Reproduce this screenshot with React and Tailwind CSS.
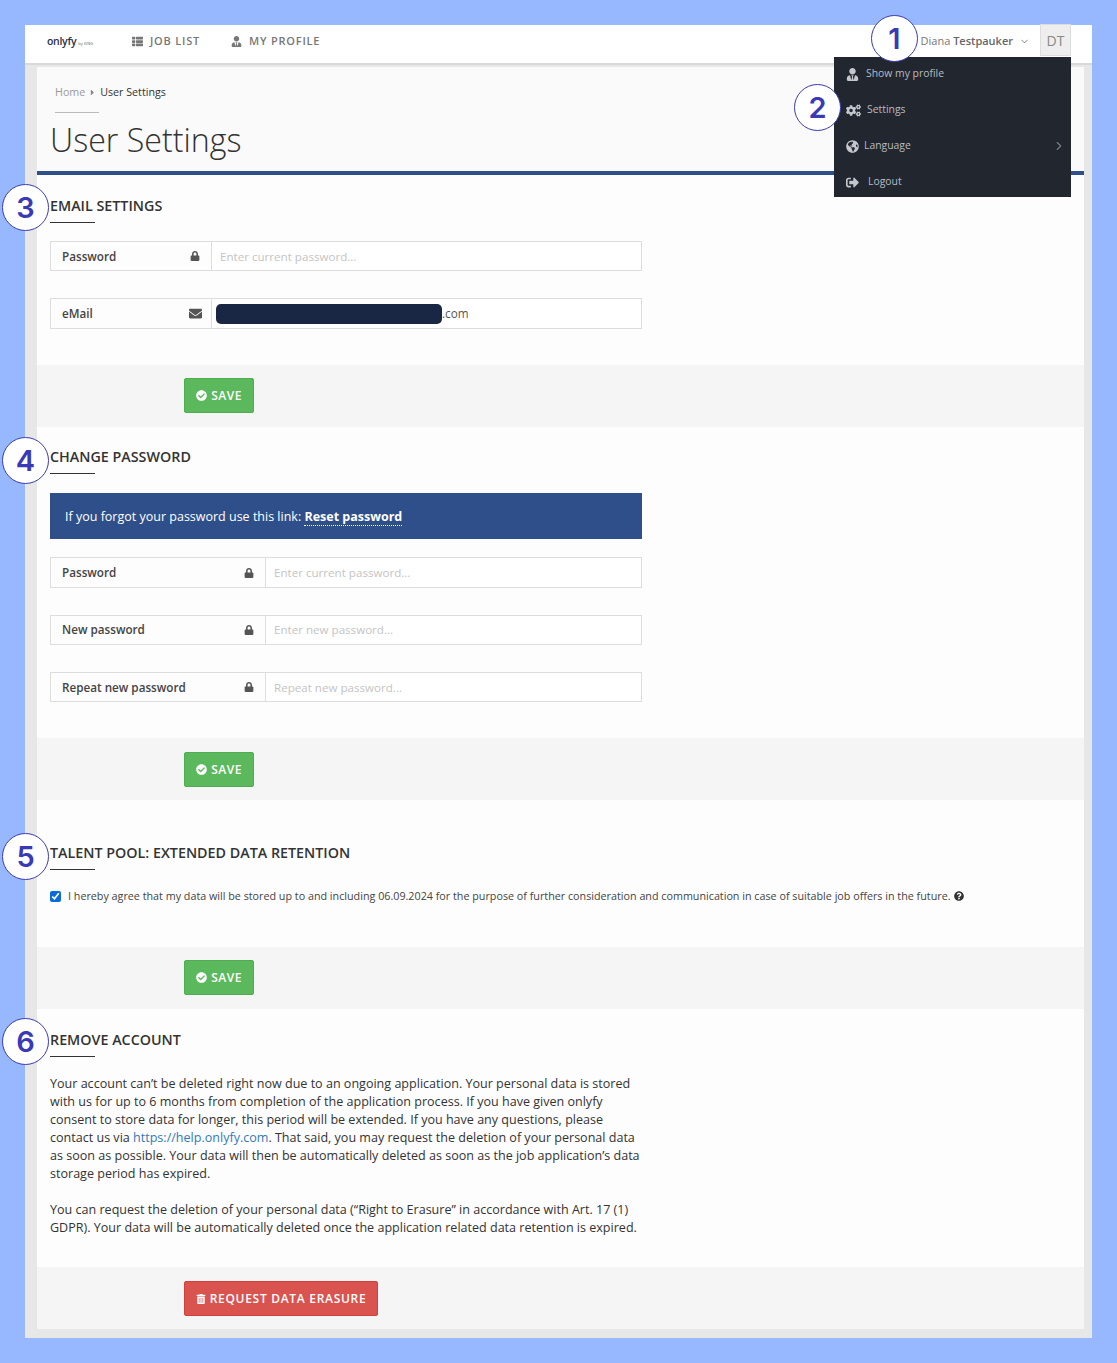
import { FaThList, FaUserTie, FaCogs, FaGlobeAmericas, FaSignOutAlt, FaLock, FaEnvelope, FaCheckCircle, FaQuestionCircle, FaTrashAlt, FaCaretRight } from "react-icons/fa";
import { LuChevronDown, LuChevronRight } from "react-icons/lu";

function Marker({ n, className }) {
  return (
    <div className={`absolute w-[47px] h-[47px] rounded-full border-[1.5px] border-[#3a3ab4] bg-white flex items-center justify-center text-[#3a3ab4] text-[29px] font-semibold font-['Inter',sans-serif] ${className}`}>
      {n}
    </div>
  );
}

function SectionTitle({ children }) {
  return (
    <div>
      <h2 className="text-[14.3px] leading-[20px] font-semibold text-[#333]">{children}</h2>
      <div className="w-[45px] h-px bg-[#333] mt-[6px]"></div>
    </div>
  );
}

function Field({ label, icon, placeholder, labelWidth, value, h = "h-[30px]", textNudge = "" }) {
  return (
    <div className={`flex w-[592px] border border-[#ddd] bg-white ${h}`}>
      <div className={`flex items-center justify-between pl-[11px] pr-[11px] border-r border-[#ddd] bg-[#fdfdfd] text-[#444] text-[11.7px] font-semibold shrink-0 ${labelWidth}`}>
        <span className={textNudge}>{label}</span>
        <span className="text-[#555] text-[10px]">{icon}</span>
      </div>
      {value ? (
        <div className="flex items-center pl-[4px] text-[#555] text-[11.7px]">
          <div className="w-[226px] h-[20px] rounded-[5px] bg-[#1a2744]"></div>
          <span>.com</span>
        </div>
      ) : (
        <div className={`flex items-center pl-[8px] text-[11.6px] text-[#c4c4c4] font-normal ${textNudge}`}>{placeholder}</div>
      )}
    </div>
  );
}

function FooterStrip({ children, className }) {
  return <div className={`bg-[#f5f5f5] h-[62px] pl-[147px] ${className}`}>{children}</div>;
}

function SaveButton() {
  return (
    <button className="flex items-center gap-[4px] h-[35px] w-[70px] justify-center rounded-[2px] border border-[#4cae4c] bg-[#5cb85c] text-white text-[12px] font-semibold tracking-[0.5px]">
      <FaCheckCircle className="text-[11px]" />
      SAVE
    </button>
  );
}

function MenuItem({ icon, label, gap, right }) {
  return (
    <div className="flex items-center h-[36px] pl-[12px] pr-[5px] text-[10.4px] text-[#b8bcc2]">
      <span className="text-[13px] text-[#c4c7cb]">{icon}</span>
      <span className={gap}>{label}</span>
      {right && <LuChevronRight className="ml-auto text-[14px] text-[#777c84]" />}
    </div>
  );
}

export default function App() {
  return (
    <div className="relative min-h-[1363px] bg-[#97b8ff] pt-[25px] px-[25px] pb-[25px] font-['Open_Sans',sans-serif]">
      <div className="bg-[#e7e7e7]">
        <header className="flex items-center h-[40px] bg-white border-b-2 border-[#d8d8d8] pl-[22px]">
          <div className="w-[85px] flex items-baseline text-[#2a3242] -mt-[4px]">
            <span className="text-[10.5px] font-semibold tracking-[-0.3px]">onlyfy</span>
            <span className="text-[4px] ml-[2px] text-[#666]">by XING</span>
          </div>
          <nav className="flex items-center text-[11px] font-semibold tracking-[0.8px] text-[#777] -mt-[6px]">
            <span className="flex items-center gap-[7px] w-[99px]"><FaThList className="text-[11px]" />JOB LIST</span>
            <span className="flex items-center gap-[7px]"><FaUserTie className="text-[11px]" />MY PROFILE</span>
          </nav>
          <div className="ml-auto mr-[21px] flex items-start h-[38px] -mt-[2px] text-[11px] text-[#777]">
            <span className="mt-[9px]">Diana <b className="font-semibold text-[#666]">Testpauker</b></span>
            <LuChevronDown className="ml-[6px] mt-[12px] text-[11px]" />
            <div className="ml-[10px] w-[31px] h-[32px] flex items-center justify-center bg-[#eee] border border-[#ddd] text-[14px] text-[#888]">DT</div>
          </div>
        </header>

        <main className="ml-[12px] mr-[8px] mt-[2px] pb-[9px]">
          <div className="bg-[#fafafa] h-[108px] border-b-4 border-[#2f4f8b] pl-[18px] pt-[17px]">
            <div className="flex items-center text-[10.7px] leading-[16px]">
              <span className="text-[#999]">Home</span>
              <FaCaretRight className="mx-[3px] text-[9px] text-[#888]" />
              <span className="text-[#333]">User Settings</span>
            </div>
            <div className="w-[44px] h-px bg-[#bbb] mt-[12px]"></div>
            <h1 className="-ml-[5px] mt-[8px] text-[32.2px] leading-[38px] font-light text-[#333]">User Settings</h1>
          </div>

          <section className="bg-[#fdfdfd] h-[190px] px-[13px] pt-[21px]">
            <SectionTitle>EMAIL SETTINGS</SectionTitle>
            <div className="mt-[18px] flex flex-col gap-[27px]">
              <Field label="Password" icon={<FaLock />} placeholder="Enter current password..." labelWidth="w-[161px]" textNudge="pt-[1px]" />
              <Field label="eMail" icon={<FaEnvelope className="text-[13px] -mr-[2px]" />} value labelWidth="w-[161px]" h="h-[31px]" />
            </div>
          </section>
          <FooterStrip className="pt-[13px]"><SaveButton /></FooterStrip>

          <section className="bg-[#fdfdfd] h-[311px] px-[13px] pt-[20px]">
            <SectionTitle>CHANGE PASSWORD</SectionTitle>
            <div className="mt-[19px] w-[592px] h-[46px] flex items-center pl-[15px] pt-[2px] bg-[#2f4f8b] text-[12.5px] text-white">
              <span>If you forgot your password use this link: <b className="font-bold border-b border-dotted border-white">Reset password</b></span>
            </div>
            <div className="mt-[18px] flex flex-col gap-[27px]">
              <Field label="Password" icon={<FaLock />} placeholder="Enter current password..." labelWidth="w-[215px]" h="h-[31px]" />
              <Field label="New password" icon={<FaLock />} placeholder="Enter new password..." labelWidth="w-[215px]" />
              <Field label="Repeat new password" icon={<FaLock />} placeholder="Repeat new password..." labelWidth="w-[215px]" textNudge="pt-[1px]" />
            </div>
          </section>
          <FooterStrip className="pt-[14px]"><SaveButton /></FooterStrip>

          <section className="bg-[#fdfdfd] h-[147px] px-[13px] pt-[43px]">
            <SectionTitle>TALENT POOL: EXTENDED DATA RETENTION</SectionTitle>
            <div className="mt-[18px] flex items-center text-[10.75px] text-[#444]">
              <input type="checkbox" checked readOnly className="w-[11px] h-[11px] mr-[7px] accent-[#0b6bdc]" />
              <span>I hereby agree that my data will be stored up to and including 06.09.2024 for the purpose of further consideration and communication in case of suitable job offers in the future.</span>
              <FaQuestionCircle className="ml-[3px] text-[10px] text-[#333]" />
            </div>
          </section>
          <FooterStrip className="pt-[13px]"><SaveButton /></FooterStrip>

          <section className="bg-[#fdfdfd] h-[258px] px-[13px] pt-[21px]">
            <SectionTitle>REMOVE ACCOUNT</SectionTitle>
            <div className="mt-[18px] w-[592px] text-[12.55px] leading-[18px] text-[#333]">
              <p>
                Your account can’t be deleted right now due to an ongoing application. Your personal data is stored with us for up to 6 months from completion of the application process. If you have given onlyfy consent to store data for longer, this period will be extended. If you have any questions, please contact us via <a className="text-[#337ab7]">https://help.onlyfy.com</a>. That said, you may request the deletion of your personal data as soon as possible. Your data will then be automatically deleted as soon as the job application’s data storage period has expired.
              </p>
              <p className="mt-[18px]">
                You can request the deletion of your personal data (“Right to Erasure” in accordance with Art. 17 (1) GDPR). Your data will be automatically deleted once the application related data retention is expired.
              </p>
            </div>
          </section>
          <FooterStrip className="pt-[14px]">
            <button className="flex items-center gap-[4px] h-[35px] w-[194px] justify-center rounded-[2px] border border-[#d43f3a] bg-[#d9534f] text-white text-[12px] font-semibold tracking-[0.7px]">
              <FaTrashAlt className="text-[10px]" />
              REQUEST DATA ERASURE
            </button>
          </FooterStrip>
        </main>
      </div>

      <div className="absolute left-[834px] top-[57px] w-[237px] h-[140px] bg-[#21262f]">
        <div className="-mt-[1px]">
          <MenuItem icon={<FaUserTie />} label="Show my profile" gap="ml-[7px]" />
          <MenuItem icon={<FaCogs className="text-[15px]" />} label="Settings" gap="ml-[6px]" />
          <MenuItem icon={<FaGlobeAmericas />} label="Language" gap="ml-[5px]" right />
          <MenuItem icon={<FaSignOutAlt />} label="Logout" gap="ml-[9px]" />
        </div>
      </div>

      <Marker n="1" className="left-[871px] top-[15px]" />
      <Marker n="2" className="left-[794px] top-[84px]" />
      <Marker n="3" className="left-[2px] top-[184px]" />
      <Marker n="4" className="left-[2px] top-[437px]" />
      <Marker n="5" className="left-[2px] top-[833px]" />
      <Marker n="6" className="left-[2px] top-[1018px]" />
    </div>
  );
}
